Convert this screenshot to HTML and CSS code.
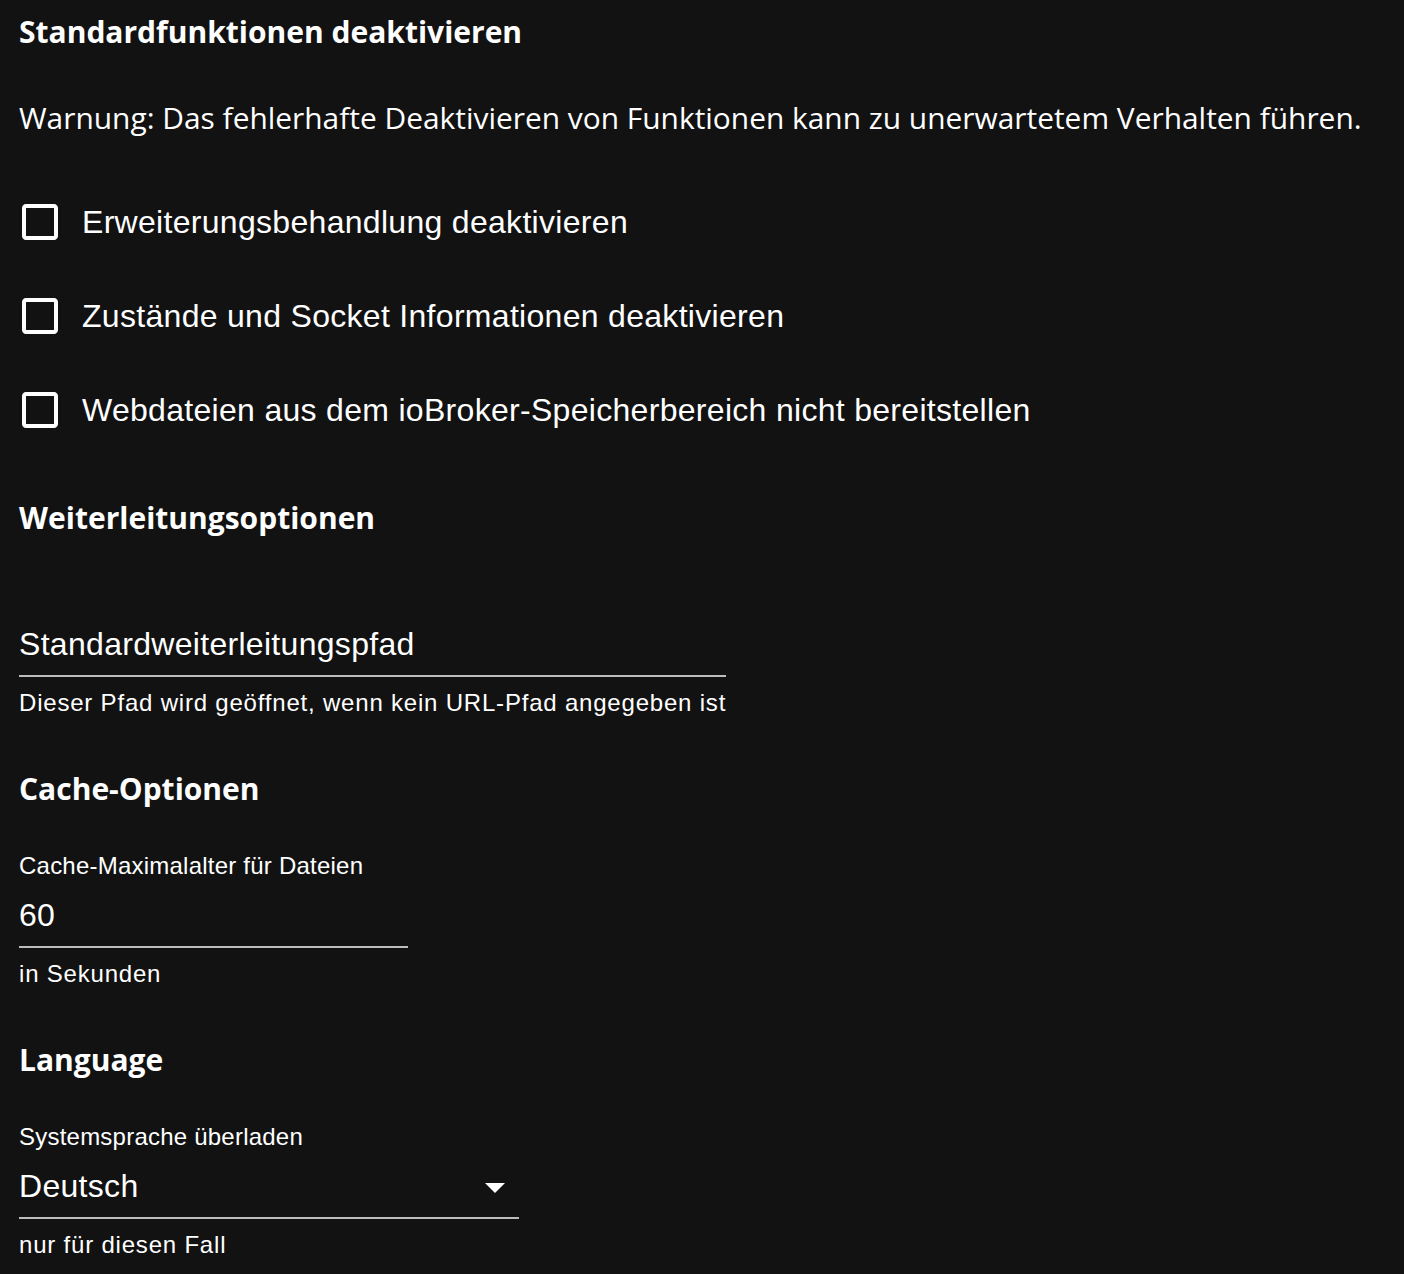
FILE: index.html
```html
<!DOCTYPE html>
<html lang="de">
<head>
<meta charset="utf-8">
<title>Einstellungen</title>
<link rel="stylesheet" href="styles.css">
</head>
<body>
<div class="page">
  <h2 class="hdr hdr-first">Standardfunktionen deaktivieren</h2>
  <p class="warn">Warnung: Das fehlerhafte Deaktivieren von Funktionen kann zu unerwartetem Verhalten führen.</p>

  <div class="checks">
    <label class="check">
      <span class="cb"><svg viewBox="0 0 24 24"><path d="M19 5v14H5V5h14m0-2H5c-1.11 0-2 .9-2 2v14c0 1.1.89 2 2 2h14c1.1 0 2-.9 2-2V5c0-1.1-.9-2-2-2z"/></svg></span>
      <span class="cb-label">Erweiterungsbehandlung deaktivieren</span>
    </label>
    <label class="check">
      <span class="cb"><svg viewBox="0 0 24 24"><path d="M19 5v14H5V5h14m0-2H5c-1.11 0-2 .9-2 2v14c0 1.1.89 2 2 2h14c1.1 0 2-.9 2-2V5c0-1.1-.9-2-2-2z"/></svg></span>
      <span class="cb-label">Zustände und Socket Informationen deaktivieren</span>
    </label>
    <label class="check">
      <span class="cb"><svg viewBox="0 0 24 24"><path d="M19 5v14H5V5h14m0-2H5c-1.11 0-2 .9-2 2v14c0 1.1.89 2 2 2h14c1.1 0 2-.9 2-2V5c0-1.1-.9-2-2-2z"/></svg></span>
      <span class="cb-label">Webdateien aus dem ioBroker-Speicherbereich nicht bereitstellen</span>
    </label>
  </div>

  <h2 class="hdr">Weiterleitungsoptionen</h2>
  <div class="field field-nolabel w-path">
    <div class="input">Standardweiterleitungspfad</div>
    <div class="helper">Dieser Pfad wird geöffnet, wenn kein URL-Pfad angegeben ist</div>
  </div>

  <h2 class="hdr">Cache-Optionen</h2>
  <div class="field w-cache">
    <div class="field-label">Cache-Maximalalter für Dateien</div>
    <div class="input">60</div>
    <div class="helper">in Sekunden</div>
  </div>

  <h2 class="hdr">Language</h2>
  <div class="field w-lang">
    <div class="field-label">Systemsprache überladen</div>
    <div class="input select">
      <span>Deutsch</span>
      <svg class="arrow" viewBox="0 0 10 5"><path d="M0 0l5 5 5-5z"/></svg>
    </div>
    <div class="helper">nur für diesen Fall</div>
  </div>
</div>
</body>
</html>
```

FILE: styles.css
```css
html, body {
  margin: 0;
  background: #121212;
  color: #ffffff;
  font-family: "Liberation Sans", Arial, sans-serif;
}

.page {
  padding: 12px 20px 0 19px;
}

.hdr {
  font-family: "Open Sans", "Noto Sans", sans-serif;
  font-weight: 700;
  font-size: 30px;
  line-height: 40px;
  margin: 46px 0 0;
  white-space: nowrap;
}

.hdr-first {
  margin-top: 0;
}

.warn {
  font-family: "Open Sans", "Noto Sans", sans-serif;
  font-size: 29.9px;
  line-height: 40px;
  margin: 46px 0 0;
  white-space: nowrap;
}

.checks {
  margin-top: 42px;
  display: flex;
  flex-direction: column;
  gap: 10px;
}

.check {
  display: flex;
  align-items: center;
  height: 84px;
  margin-left: -21px;
}

.cb {
  display: flex;
  padding: 18px;
}

.cb svg {
  width: 48px;
  height: 48px;
  fill: #ffffff;
  display: block;
}

.cb-label {
  font-size: 32px;
  line-height: 48px;
  letter-spacing: 0.00938em;
  white-space: nowrap;
}

.field {
  display: flex;
  flex-direction: column;
  margin-top: 43px;
}

.field-nolabel {
  padding-top: 32px;
}

.field-label {
  height: 32px;
  font-size: 24px;
  line-height: 28px;
  letter-spacing: 0.00938em;
  white-space: nowrap;
}

.input {
  font-size: 32px;
  line-height: 46px;
  padding: 8px 0;
  border-bottom: 2px solid #bcbcbc;
  letter-spacing: 0.00938em;
  white-space: nowrap;
}

.select {
  display: flex;
  justify-content: space-between;
  align-items: flex-start;
}

.arrow {
  width: 20px;
  height: 10px;
  margin: 20px 14px 0 0;
  fill: #ffffff;
  display: block;
}

.helper {
  margin-top: 6px;
  font-size: 24px;
  line-height: 40px;
  letter-spacing: 0.0333em;
  white-space: nowrap;
}

.w-path { width: 707px; }
.w-cache { width: 389px; }
.w-lang { width: 500px; }
```
